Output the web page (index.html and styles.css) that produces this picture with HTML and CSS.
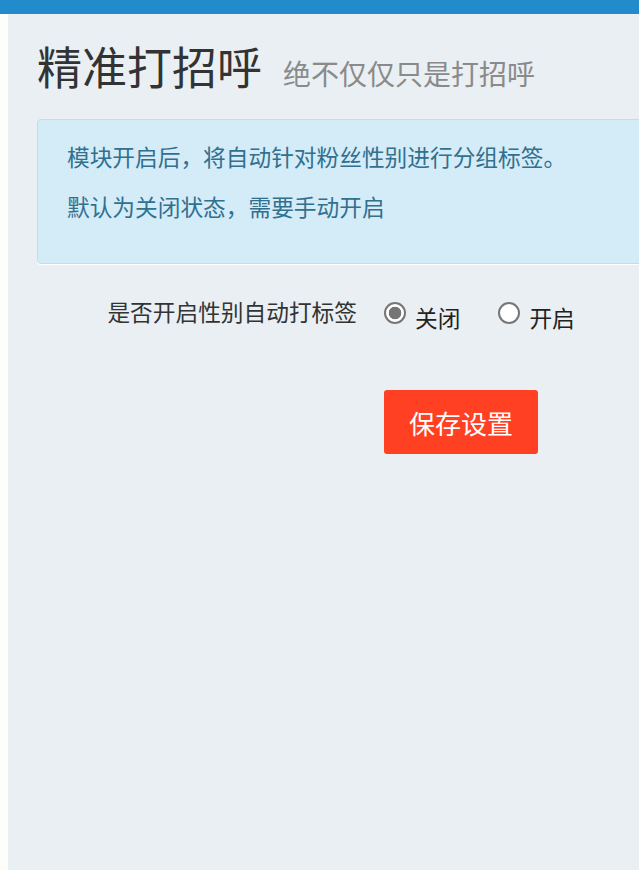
FILE: index.html
```html
<!DOCTYPE html>
<html lang="zh-CN">
<head>
<meta charset="utf-8">
<title>精准打招呼</title>
<link rel="stylesheet" href="styles.css">
</head>
<body>
<div class="topbar"></div>
<div class="page">
  <div class="gutter"></div>
  <main class="main">
    <div class="content">
      <h1 class="title">精准打招呼<small class="subtitle">绝不仅仅只是打招呼</small></h1>
      <div class="alert">
        <p>模块开启后，将自动针对粉丝性别进行分组标签。</p>
        <p>默认为关闭状态，需要手动开启</p>
      </div>
      <form class="form">
        <div class="form-label">是否开启性别自动打标签</div>
        <div class="options">
          <label class="option"><input type="radio" name="gender" class="radio" checked><span class="option-text">关闭</span></label>
          <label class="option"><input type="radio" name="gender" class="radio"><span class="option-text">开启</span></label>
        </div>
        <div class="spacer"></div>
        <div><button type="button" class="btn">保存设置</button></div>
      </form>
    </div>
  </main>
</div>
</body>
</html>
```

FILE: styles.css
```css
html, body {
  margin: 0;
  padding: 0;
  height: 100%;
  background: #ffffff;
  font-family: "Noto Sans CJK SC", "Noto Sans", sans-serif;
}
.topbar {
  height: 14px;
  background: #228bcc;
}
.page {
  display: flex;
  height: 856px;
}
.gutter {
  width: 8px;
  background: #fdfdfb;
  flex: none;
}
.main {
  flex: 1;
  background: #e9eff3;
  overflow: hidden;
  padding: 25px 0 0 29px;
}
.content {
  width: 780px;
}
.title {
  margin: 0;
  font-size: 45px;
  line-height: 54px;
  font-weight: normal;
  color: #333333;
}
.subtitle {
  font-size: 28px;
  color: #8a8a8a;
  margin-left: 21px;
}
.alert {
  margin-top: 19px;
  background: #d4ebf8;
  border: 1px solid #b7e2f1;
  border-radius: 4px;
  box-shadow: 0 1px 0 #ffffff;
  padding: 22px 29px 41px;
  color: #31708f;
  font-size: 22.7px;
}
.alert p {
  margin: 0 0 20px;
  line-height: 30px;
}
.alert p:last-child {
  margin-bottom: 0;
}
.form {
  margin-top: 33px;
  display: grid;
  grid-template-columns: 320px auto;
  column-gap: 27px;
  row-gap: 57px;
  align-items: start;
}
.form-label {
  text-align: right;
  font-size: 22.7px;
  line-height: 30px;
  color: #333333;
}
.options {
  display: flex;
  gap: 38px;
}
.option {
  display: flex;
  align-items: flex-start;
  gap: 9px;
  cursor: pointer;
}
.radio {
  appearance: none;
  -webkit-appearance: none;
  margin: 5px 0 0;
  width: 22px;
  height: 22px;
  border: 2px solid #767676;
  border-radius: 50%;
  background: #ffffff;
  box-sizing: border-box;
  flex: none;
}
.radio:checked {
  background: radial-gradient(circle, #757575 0 6px, #ffffff 6.6px);
}
.option-text {
  margin-top: 6px;
  font-size: 22.7px;
  line-height: 30px;
  color: #222222;
}
.btn {
  width: 154px;
  height: 64px;
  border: none;
  border-radius: 3px;
  background: #ff4023;
  color: #ffffff;
  font-family: "Noto Sans CJK SC", "Noto Sans", sans-serif;
  font-size: 26px;
  padding: 0;
  cursor: pointer;
}
```
